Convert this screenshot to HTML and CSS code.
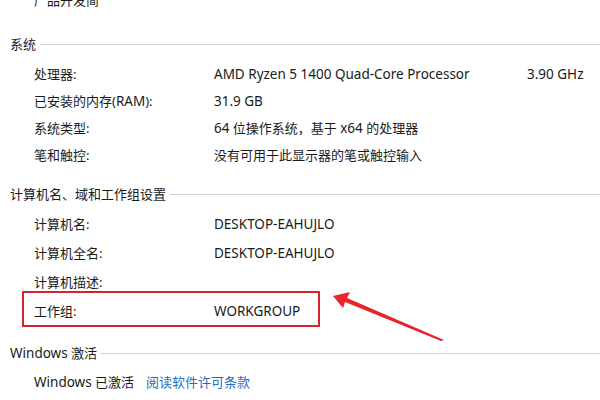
FILE: index.html
```html
<!DOCTYPE html>
<html lang="zh-CN">
<head>
<meta charset="utf-8">
<link rel="stylesheet" href="styles.css">
</head>
<body>
<div class="page">
  <div class="top-row">产品开发简</div>

  <section class="group group-sys">
    <div class="heading"><span>系统</span></div>
    <div class="rows">
      <div class="row"><span class="label">处理器:</span><span class="value en">AMD Ryzen 5 1400 Quad-Core Processor</span><span class="extra en">3.90 GHz</span></div>
      <div class="row"><span class="label">已安装的内存(<span class="en">RAM</span>):</span><span class="value en">31.9 GB</span></div>
      <div class="row"><span class="label">系统类型:</span><span class="value"><span class="en">64</span> 位操作系统，基于 <span class="en">x64</span> 的处理器</span></div>
      <div class="row"><span class="label">笔和触控:</span><span class="value">没有可用于此显示器的笔或触控输入</span></div>
    </div>
  </section>

  <section class="group group-name">
    <div class="heading"><span>计算机名、域和工作组设置</span></div>
    <div class="rows">
      <div class="row"><span class="label">计算机名:</span><span class="value en">DESKTOP-EAHUJLO</span></div>
      <div class="row"><span class="label">计算机全名:</span><span class="value en">DESKTOP-EAHUJLO</span></div>
      <div class="row"><span class="label">计算机描述:</span><span class="value"></span></div>
      <div class="row highlight"><span class="label">工作组:</span><span class="value en">WORKGROUP</span></div>
    </div>
  </section>

  <section class="group group-act">
    <div class="heading"><span><span class="en">Windows</span> 激活</span></div>
    <div class="rows">
      <div class="row act-row"><span><span class="en">Windows</span> 已激活</span><a class="link">阅读软件许可条款</a></div>
    </div>
  </section>

  <svg class="arrow" width="600" height="400" viewBox="0 0 600 400">
    <polygon points="333,309 350,305 347,311 444,353 441,354 345,315 343,321" fill="#e5262b"/>
  </svg>
</div>
</body>
</html>
```

FILE: styles.css
```css
html, body {
  margin: 0;
  padding: 0;
  background: #ffffff;
}
body {
  font-family: "Segoe UI", "Noto Sans", "Noto Sans CJK SC", sans-serif;
  font-size: 13px;
  color: #1a1a1a;
  width: 600px;
  height: 400px;
  overflow: hidden;
}
.en {
  font-size: 13.5px;
}
.page {
  position: relative;
  width: 600px;
  height: 400px;
}
.top-row {
  height: 27px;
  line-height: 27px;
  margin-top: -13px;
  padding-left: 34px;
}
.heading {
  display: flex;
  align-items: center;
  height: 28px;
  padding-left: 10px;
}
.heading::after {
  content: "";
  flex: 1;
  height: 1px;
  background: #cfcfcf;
  margin-left: 4px;
  margin-top: 2px;
}
.group-sys { margin-top: 15px; }
.group-sys .rows { padding-top: 3px; }
.group-sys .row { height: 27px; }
.group-name { margin-top: 11px; }
.group-name .rows { padding-top: 2px; }
.group-name .row { height: 29px; }
.group-act { margin-top: 13px; }
.group-act .row { height: 30px; }
.row {
  display: grid;
  grid-template-columns: 180px 313px auto;
  align-items: center;
  padding-left: 34px;
  position: relative;
}
.act-row {
  display: flex;
  gap: 12px;
}
.link {
  color: #1f6fc5;
}
.highlight::after {
  content: "";
  position: absolute;
  left: 22px;
  top: -5px;
  width: 294px;
  height: 32px;
  border: 2px solid #d7232d;
}
.arrow {
  position: absolute;
  left: 0;
  top: 0;
  pointer-events: none;
}
```
